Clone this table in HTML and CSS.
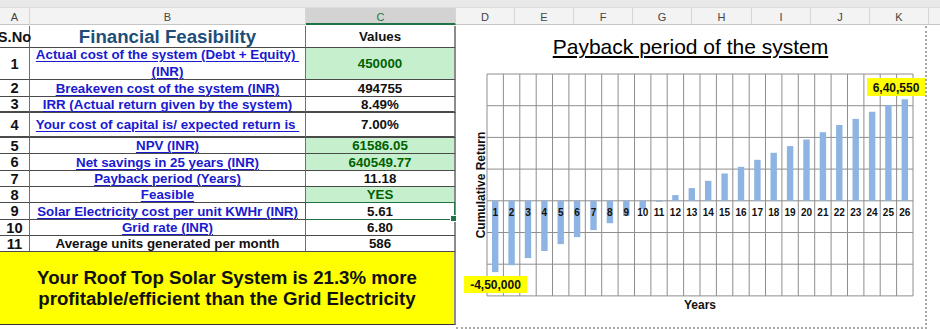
FILE: index.html
```html
<!DOCTYPE html>
<html>
<head>
<meta charset="utf-8">
<link rel="stylesheet" href="styles.css">
</head>
<body>
<div class="sheet">
  <div class="colbar">
    <div class="topstrip"></div>
    <div class="letters">
      <div class="col w-a">A</div>
      <div class="col w-b">B</div>
      <div class="col w-c sel">C</div>
      <div class="col w-d">D</div>
      <div class="col w-d">E</div>
      <div class="col w-d">F</div>
      <div class="col w-d">G</div>
      <div class="col w-h">H</div>
      <div class="col w-d">I</div>
      <div class="col w-d">J</div>
      <div class="col w-d">K</div>
      <div class="col rest"></div>
    </div>
  </div>
  <div class="main">
    <div class="left">
      <div class="grid">
        <div class="cell num">S.No</div>
        <div class="cell head">Financial Feasibility</div>
        <div class="cell val last">Values</div>

        <div class="cell num">1</div>
        <div class="cell lab"><span class="lnk two">Actual cost of the system (Debt + Equity)&nbsp;<br>(INR)</span></div>
        <div class="cell val good last">450000</div>

        <div class="cell num">2</div>
        <div class="cell lab"><span class="lnk">Breakeven cost of the system (INR)</span></div>
        <div class="cell val last">494755</div>

        <div class="cell num thick">3</div>
        <div class="cell lab thick"><span class="lnk">IRR (Actual return given by the system)</span></div>
        <div class="cell val last thick">8.49%</div>

        <div class="cell num thick">4</div>
        <div class="cell lab thick"><span class="lnk">Your cost of capital is/ expected return is&nbsp;</span></div>
        <div class="cell val last thick">7.00%</div>

        <div class="cell num">5</div>
        <div class="cell lab"><span class="lnk">NPV (INR)</span></div>
        <div class="cell val good last">61586.05</div>

        <div class="cell num">6</div>
        <div class="cell lab"><span class="lnk">Net savings in 25 years (INR)</span></div>
        <div class="cell val good last">640549.77</div>

        <div class="cell num">7</div>
        <div class="cell lab"><span class="lnk">Payback period (Years)</span></div>
        <div class="cell val last">11.18</div>

        <div class="cell num">8</div>
        <div class="cell lab"><span class="lnk">Feasible</span></div>
        <div class="cell val good last">YES</div>

        <div class="cell num">9</div>
        <div class="cell lab"><span class="lnk">Solar Electricity cost per unit KWHr (INR)</span></div>
        <div class="cell val last selected">5.61</div>

        <div class="cell num">10</div>
        <div class="cell lab"><span class="lnk">Grid rate (INR)</span></div>
        <div class="cell val last">6.80</div>

        <div class="cell num">11</div>
        <div class="cell lab plain">Average units generated per month</div>
        <div class="cell val last">586</div>
      </div>
      <div class="banner">Your Roof Top Solar System is 21.3% more<br>profitable/efficient than the Grid Electricity</div>
    </div>

    <div class="chart">
      <div class="title">Payback period of the system</div>
      <svg class="plot" width="469" height="266" viewBox="456 60 469 266" xmlns="http://www.w3.org/2000/svg">
        <g class="grid-lines">
          <line x1="487" y1="73" x2="913" y2="73"/>
          <line x1="487" y1="104.7" x2="913" y2="104.7"/>
          <line x1="487" y1="136.4" x2="913" y2="136.4"/>
          <line x1="487" y1="168.1" x2="913" y2="168.1"/>
          <line x1="487" y1="199.8" x2="913" y2="199.8"/>
          <line x1="487" y1="231.5" x2="913" y2="231.5"/>
          <line x1="487" y1="263.2" x2="913" y2="263.2"/>
          <line x1="487" y1="294.9" x2="913" y2="294.9"/>
          <line x1="487" y1="73" x2="487" y2="294.9"/>
          <line x1="503.4" y1="73" x2="503.4" y2="294.9"/>
          <line x1="519.8" y1="73" x2="519.8" y2="294.9"/>
          <line x1="536.2" y1="73" x2="536.2" y2="294.9"/>
          <line x1="552.5" y1="73" x2="552.5" y2="294.9"/>
          <line x1="568.9" y1="73" x2="568.9" y2="294.9"/>
          <line x1="585.3" y1="73" x2="585.3" y2="294.9"/>
          <line x1="601.7" y1="73" x2="601.7" y2="294.9"/>
          <line x1="618.1" y1="73" x2="618.1" y2="294.9"/>
          <line x1="634.5" y1="73" x2="634.5" y2="294.9"/>
          <line x1="650.9" y1="73" x2="650.9" y2="294.9"/>
          <line x1="667.2" y1="73" x2="667.2" y2="294.9"/>
          <line x1="683.6" y1="73" x2="683.6" y2="294.9"/>
          <line x1="700" y1="73" x2="700" y2="294.9"/>
          <line x1="716.4" y1="73" x2="716.4" y2="294.9"/>
          <line x1="732.8" y1="73" x2="732.8" y2="294.9"/>
          <line x1="749.2" y1="73" x2="749.2" y2="294.9"/>
          <line x1="765.5" y1="73" x2="765.5" y2="294.9"/>
          <line x1="781.9" y1="73" x2="781.9" y2="294.9"/>
          <line x1="798.3" y1="73" x2="798.3" y2="294.9"/>
          <line x1="814.7" y1="73" x2="814.7" y2="294.9"/>
          <line x1="831.1" y1="73" x2="831.1" y2="294.9"/>
          <line x1="847.5" y1="73" x2="847.5" y2="294.9"/>
          <line x1="863.9" y1="73" x2="863.9" y2="294.9"/>
          <line x1="880.2" y1="73" x2="880.2" y2="294.9"/>
          <line x1="896.6" y1="73" x2="896.6" y2="294.9"/>
          <line x1="913" y1="73" x2="913" y2="294.9"/>
        </g>
        <g class="bars">
          <rect x="492.0" y="199.8" width="6.4" height="71.3"/>
          <rect x="508.4" y="199.8" width="6.4" height="64.4"/>
          <rect x="524.8" y="199.8" width="6.4" height="57.3"/>
          <rect x="541.2" y="199.8" width="6.4" height="50.2"/>
          <rect x="557.5" y="199.8" width="6.4" height="43.3"/>
          <rect x="573.9" y="199.8" width="6.4" height="36.3"/>
          <rect x="590.3" y="199.8" width="6.4" height="29.3"/>
          <rect x="606.7" y="199.8" width="6.4" height="22.4"/>
          <rect x="623.1" y="199.8" width="6.4" height="15.1"/>
          <rect x="639.5" y="199.8" width="6.4" height="8.2"/>
          <rect x="655.9" y="199.8" width="6.4" height="1"/>
          <rect x="672.2" y="194.1" width="6.4" height="5.7"/>
          <rect x="688.6" y="187.1" width="6.4" height="12.7"/>
          <rect x="705.0" y="179.8" width="6.4" height="20"/>
          <rect x="721.4" y="172.5" width="6.4" height="27.3"/>
          <rect x="737.8" y="165.8" width="6.4" height="34"/>
          <rect x="754.2" y="158.8" width="6.4" height="41"/>
          <rect x="770.5" y="151.8" width="6.4" height="48"/>
          <rect x="786.9" y="145.1" width="6.4" height="54.7"/>
          <rect x="803.3" y="138.5" width="6.4" height="61.3"/>
          <rect x="819.7" y="131.2" width="6.4" height="68.6"/>
          <rect x="836.1" y="124.0" width="6.4" height="75.8"/>
          <rect x="852.5" y="117.9" width="6.4" height="81.9"/>
          <rect x="868.9" y="110.8" width="6.4" height="89"/>
          <rect x="885.2" y="104.1" width="6.4" height="95.7"/>
          <rect x="901.6" y="98.3" width="6.4" height="101.5"/>
        </g>
        <g class="cat">
          <text x="495.2" y="215">1</text>
          <text x="511.6" y="215">2</text>
          <text x="528.0" y="215">3</text>
          <text x="544.4" y="215">4</text>
          <text x="560.7" y="215">5</text>
          <text x="577.1" y="215">6</text>
          <text x="593.5" y="215">7</text>
          <text x="609.9" y="215">8</text>
          <text x="626.3" y="215">9</text>
          <text x="642.7" y="215">10</text>
          <text x="659.1" y="215">11</text>
          <text x="675.4" y="215">12</text>
          <text x="691.8" y="215">13</text>
          <text x="708.2" y="215">14</text>
          <text x="724.6" y="215">15</text>
          <text x="741.0" y="215">16</text>
          <text x="757.4" y="215">17</text>
          <text x="773.7" y="215">18</text>
          <text x="790.1" y="215">19</text>
          <text x="806.5" y="215">20</text>
          <text x="822.9" y="215">21</text>
          <text x="839.3" y="215">22</text>
          <text x="855.7" y="215">23</text>
          <text x="872.1" y="215">24</text>
          <text x="888.4" y="215">25</text>
          <text x="904.8" y="215">26</text>
        </g>
        <g class="dlabel">
          <rect x="867" y="77" width="58" height="18"/>
          <text x="896" y="90.5">6,40,550</text>
          <rect x="464" y="275" width="63" height="17"/>
          <text x="495.5" y="287.7">-4,50,000</text>
        </g>
        <text class="axis-title" x="485" y="184" transform="rotate(-90 485 184)">Cumulative Return</text>
        <text class="axis-title" x="700" y="308">Years</text>
      </svg>
    </div>
    <div class="after"></div>
  </div>
</div>
</body>
</html>
```
FILE: styles.css
```css
* { box-sizing: border-box; }
html, body { margin: 0; padding: 0; background: #ffffff; }
body {
  width: 940px;
  height: 329px;
  overflow: hidden;
  font-family: "Liberation Sans", Arial, sans-serif;
}

.sheet { width: 940px; }

/* column header bar */
.colbar { height: 26px; }
.topstrip { height: 8px; background: #e9e9e9; border-bottom: 1px solid #dcdcdc; }
.letters {
  display: flex;
  height: 17px;
  background: #f3f3f3;
  border-bottom: 1px solid #c6c6c6;
}
.col {
  flex: none;
  height: 16px;
  border-right: 1px solid #d6d6d6;
  text-align: center;
  font-size: 11px;
  line-height: 12px;
  padding-top: 3px;
  color: #444444;
}
.w-a { width: 30px; }
.w-b { width: 276px; }
.w-c { width: 150px; }
.w-d { width: 59px; }
.w-h { width: 60px; }
.col.rest { flex: 1; border-right: 0; }
.col.sel {
  background: #d3d3d3;
  color: #217346;
  border-bottom: 2px solid #217346;
  height: 17px;
}

/* main area */
.main { display: flex; align-items: flex-start; }
.left { width: 456px; flex: none; }

.grid {
  display: grid;
  grid-template-columns: 30px 276px 150px;
  grid-template-rows: 22px 32px 17px 16px 25px 16px 17px 16px 16px 17px 16px 16px;
}
.cell {
  display: flex;
  align-items: center;
  justify-content: center;
  text-align: center;
  white-space: nowrap;
  border-right: 1px solid #6f6f6f;
  border-bottom: 1px solid #4a4a4a;
  font-weight: bold;
  font-size: 13.33px;
  color: #111111;
  position: relative;
}
.cell.thick { border-bottom-width: 2px; }
.cell.last { border-right: 2px solid #8c8c8c; }
.num { font-size: 14.67px; color: #111; }
.head { font-size: 18.67px; color: #1f4e79; }
.val { font-size: 13.33px; }
.good { background: #c6efce; color: #006100; }
.lnk { color: #1a1ad0; text-decoration: underline; text-decoration-thickness: 1px; text-underline-offset: 2px; }
.lnk.two { line-height: 16.7px; display: inline-block; }
.plain { color: #111111; }

.selected::after {
  content: "";
  position: absolute;
  left: -1px; top: -1px; right: -1px; bottom: -1px;
  border: 1.5px solid #217346;
}
.selected::before {
  content: "";
  position: absolute;
  right: -3px; bottom: -3px;
  width: 5px; height: 5px;
  background: #217346;
  border: 1px solid #ffffff;
  z-index: 2;
}

.banner {
  height: 73px;
  background: #ffff00;
  border-right: 2px solid #8c8c8c;
  border-bottom: 1px solid #333333;
  display: flex;
  align-items: center;
  justify-content: center;
  text-align: center;
  font-weight: bold;
  font-size: 18.67px;
  line-height: 21px;
  color: #111111;
}

/* chart */
.chart {
  width: 471px;
  flex: none;
  height: 303px;
  border-right: 2px dotted #a9a9a9;
  border-bottom: 2px dotted #a9a9a9;
  display: flex;
  flex-direction: column;
  align-items: center;
}
.title {
  height: 35px;
  padding-top: 9px;
  font-size: 21px;
  line-height: 24px;
  color: #000000;
  text-decoration: underline;
  text-decoration-thickness: 1.5px;
  text-underline-offset: 2px;
}
.plot { display: block; }
.grid-lines line { stroke: #8e8e8e; stroke-width: 1; }
.bars rect { fill: #8db4e2; }
.cat text {
  font-family: "Liberation Sans", Arial, sans-serif;
  font-weight: bold;
  font-size: 10px;
  text-anchor: middle;
  fill: #111111;
}
.dlabel rect { fill: #ffff00; }
.dlabel text {
  font-family: "Liberation Sans", Arial, sans-serif;
  font-weight: bold;
  font-size: 12px;
  text-anchor: middle;
  fill: #111111;
}
.axis-title {
  font-family: "Liberation Sans", Arial, sans-serif;
  font-weight: bold;
  font-size: 12px;
  text-anchor: middle;
  fill: #111111;
}
.after { flex: 1; }
```
